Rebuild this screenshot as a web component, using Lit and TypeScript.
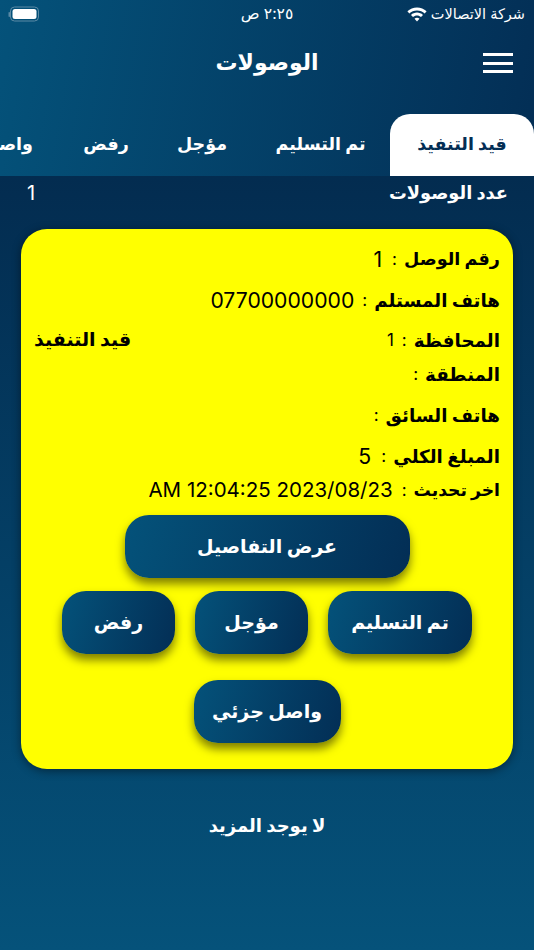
import { LitElement, html, css } from "lit";
import { customElement } from "lit/decorators.js";

@customElement("app-root")
export class AppRoot extends LitElement {
  static styles = css`
    :host { display: block; width: 534px; height: 950px; overflow: hidden; font-family: "Inter", "DejaVu Sans", sans-serif; color: #fff; background: linear-gradient(180deg, #032c50 176px, #05527a 100%); }
    .top { height: 176px; background: linear-gradient(100deg, #04527a 0%, #032e55 100%); display: flex; flex-direction: column; }
    .status { height: 27px; padding: 0 9px 0 8px; display: flex; justify-content: space-between; align-items: center; font-size: 14.5px; position: relative; }
    .carrier { display: flex; align-items: center; gap: 4px; }
    .clock { position: absolute; left: 0; right: 0; text-align: center; top: 4px; font-size: 15.5px; }
    .battery { display: block; }
    .head { height: 70px; display: flex; align-items: center; justify-content: center; position: relative; }
    .title { font-size: 22px; font-weight: 700; }
    .burger { position: absolute; right: 21px; top: 26px; width: 30px; display: flex; flex-direction: column; gap: 5.5px; }
    .burger i { display: block; height: 3px; background: #fff; }
    .tabs { margin-top: 17px; height: 62px; display: flex; direction: rtl; overflow: hidden; align-items: stretch; }
    .tab { flex: none; display: flex; align-items: center; justify-content: center; font-size: 17.5px; font-weight: 700; box-sizing: border-box; white-space: nowrap; padding-bottom: 3px; }
    .tab.on { width: 144px; background: #fff; color: #032e55; border-radius: 20px 20px 0 0; }
    .t2 { width: 139px; }
    .t3 { width: 98px; }
    .t4 { width: 94px; }
    .t5 { width: 100px; justify-content: flex-start; padding-inline-start: 26px; }
    .count { display: flex; justify-content: space-between; direction: rtl; padding: 5px 26px 0 27px; font-size: 17.8px; font-weight: 700; line-height: 24px; }
    .count .n { font-size: 20px; font-weight: 400; }
    .card { margin: 24px 21px 0; height: 540px; background: #ff0; border-radius: 26px; color: #000; box-shadow: 0 2px 10px rgba(0,0,0,.45); direction: rtl; box-sizing: border-box; padding: 9px 13px 0 13px; display: flex; flex-direction: column; }
    .row { display: flex; gap: 7px; font-size: 18.3px; line-height: 30px; height: 41px; align-items: center; justify-content: flex-start; }
    .row .lb { font-weight: 700; }
    .row.first .lb { font-size: 17.6px; }
    .row .sep { font-size: 17px; }
    .row .v { font-size: 21.2px; margin-right: 1px; }
    .row.city { justify-content: space-between; height: 40px; }
    .row.city .state { font-size: 19px; }
    .row .left { display: flex; gap: 7px; align-items: center; }
    .row .v.small { font-size: 17px; margin-right: 1px; }
    .row .v.gapped { margin-right: 3px; }
    .row.zone { height: 28px; margin-bottom: 6px; }
    .row.last { height: 28px; }
    .row.last .lb { font-size: 17.2px; }
    .row.last .v { font-size: 20.5px; margin-right: 2px; }
    .btn { height: 63px; border-radius: 24px; background: linear-gradient(105deg, #04527a 0%, #032e55 100%); color: #fff; font-size: 19px; font-weight: 700; display: flex; align-items: center; justify-content: center; box-shadow: 0 6px 10px rgba(0,0,0,.5); box-sizing: border-box; padding-bottom: 1px; }
    .actions { display: flex; flex-direction: column; align-items: center; margin-top: 11px; }
    .btn.wide { width: 285px; }
    .line { display: flex; direction: rtl; gap: 20px; margin-top: 13px; }
    .line .a { width: 144px; }
    .line .b, .line .c { width: 113px; }
    .btn.d { width: 147px; margin-top: 26px; }
    .more { text-align: center; font-size: 18px; font-weight: 700; margin-top: 46px; }
  `;

  render() {
    return html`
      <div class="top">
        <div class="status">
          <svg class="battery" width="31" height="16" viewBox="0 0 31 16">
            <rect x="0.5" y="6" width="1.5" height="5" rx="0.7" fill="#5b8aa5"/>
            <rect x="2.5" y="1" width="28" height="14" rx="4" fill="none" stroke="#5b8aa5" stroke-width="1"/>
            <rect x="4.5" y="3" width="24" height="10" rx="2.5" fill="#fff"/>
          </svg>
          <div class="clock" dir="rtl">٢:٢٥ ص</div>
          <div class="carrier" dir="rtl">
            <span>شركة الاتصالات</span>
            <svg width="20" height="16" viewBox="0 0 20 16" fill="#fff">
              <path d="M10 1.500c3.700 0 7 1.400 9.600 3.800l-1.900 2.100C15.700 5.500 13 4.400 10 4.400S4.300 5.500 2.300 7.400L.4 5.300C3 2.900 6.300 1.500 10 1.500z"/>
              <path d="M10 6.600c2.300 0 4.400.9 6 2.300l-2 2.100C12.900 10.100 11.500 9.500 10 9.500s-2.900.6-4 1.500L4 8.900c1.600-1.400 3.700-2.300 6-2.300z"/>
              <path d="M10 11.800c1 0 1.800.4 2.500 1L10 15.500l-2.500-2.700c.7-.6 1.500-1 2.500-1z"/>
            </svg>
          </div>
        </div>
        <div class="head">
          <div class="title">الوصولات</div>
          <div class="burger"><i></i><i></i><i></i></div>
        </div>
        <div class="tabs">
          <div class="tab on">قيد التنفيذ</div>
          <div class="tab t2">تم التسليم</div>
          <div class="tab t3">مؤجل</div>
          <div class="tab t4">رفض</div>
          <div class="tab t5">واصل جزئي</div>
        </div>
      </div>
      <div class="count"><span>عدد الوصولات</span><span class="n">1</span></div>
      <div class="card">
        <div class="row first"><span class="lb">رقم الوصل</span><span class="sep">:</span><span class="v gapped">1</span></div>
        <div class="row"><span class="lb">هاتف المستلم</span><span class="sep">:</span><span class="v">07700000000</span></div>
        <div class="row city">
          <div class="left"><span class="lb">المحافظة</span><span class="sep">:</span><span class="v small">1</span></div>
          <span class="lb state">قيد التنفيذ</span>
        </div>
        <div class="row zone"><span class="lb">المنطقة</span><span class="sep">:</span></div>
        <div class="row"><span class="lb">هاتف السائق</span><span class="sep">:</span></div>
        <div class="row"><span class="lb">المبلغ الكلي</span><span class="sep">:</span><span class="v gapped">5</span></div>
        <div class="row last"><span class="lb">اخر تحديث</span><span class="sep">:</span><span class="v">2023/08/23 12:04:25 AM</span></div>
        <div class="actions">
          <div class="btn wide">عرض التفاصيل</div>
          <div class="line">
            <div class="btn a">تم التسليم</div>
            <div class="btn b">مؤجل</div>
            <div class="btn c">رفض</div>
          </div>
          <div class="btn d">واصل جزئي</div>
        </div>
      </div>
      <div class="more" dir="rtl">لا يوجد المزيد</div>
    `;
  }
}
